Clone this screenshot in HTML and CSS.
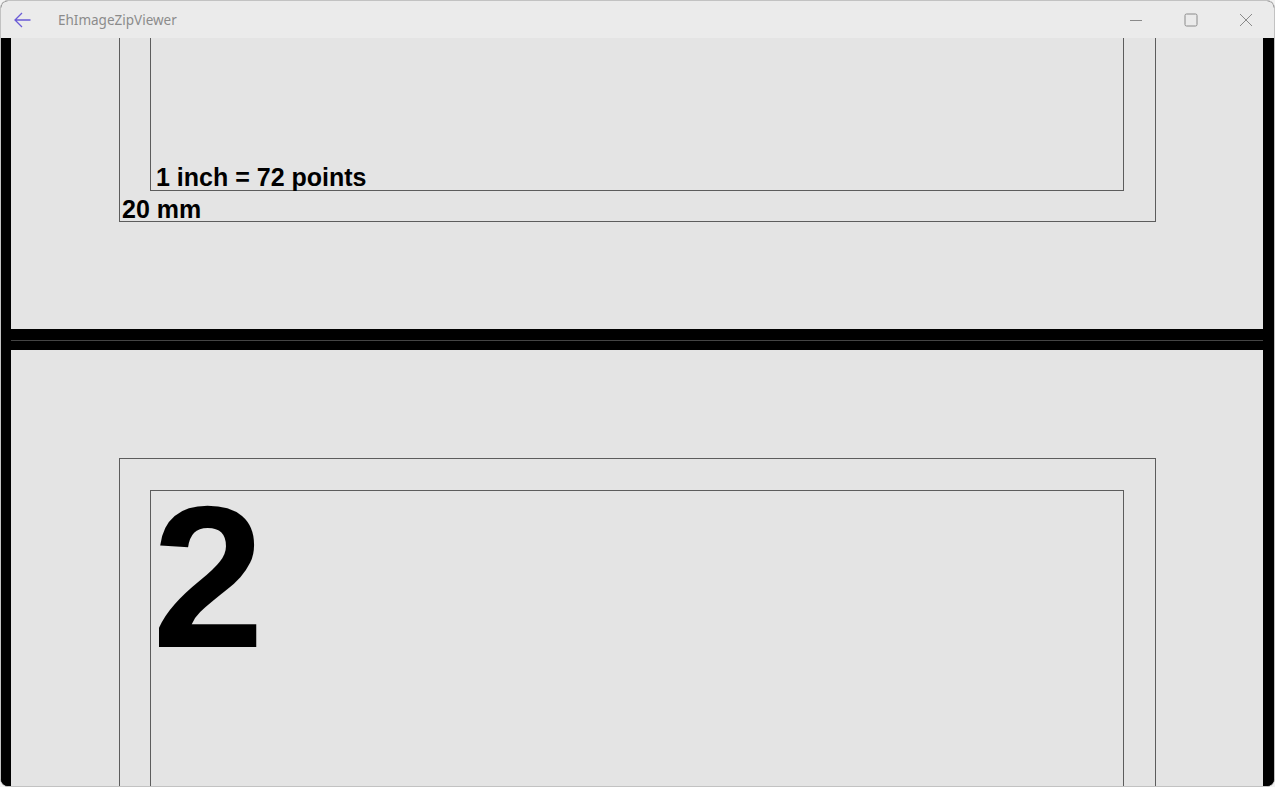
FILE: index.html
```html
<!DOCTYPE html>
<html>
<head>
<meta charset="utf-8">
<title>EhImageZipViewer</title>
<link rel="stylesheet" href="styles.css">
</head>
<body>
<div class="window">
  <div class="titlebar">
    <div class="back">
      <svg width="18" height="16" viewBox="0 0 18 16"><path d="M1 8 H16.5 M8 1 L1 8 L8 15" fill="none" stroke="#6a5bd6" stroke-width="1.3"/></svg>
    </div>
    <div class="title">EhImageZipViewer</div>
    <div class="caption">
      <div class="cbtn"><svg width="14" height="14" viewBox="0 0 14 14"><path d="M1 7.5 H13" stroke="#8a8a8a" stroke-width="1"/></svg></div>
      <div class="cbtn"><svg width="14" height="14" viewBox="0 0 14 14"><rect x="1" y="1" width="12" height="12" rx="1.5" fill="none" stroke="#8a8a8a" stroke-width="1"/></svg></div>
      <div class="cbtn"><svg width="14" height="14" viewBox="0 0 14 14"><path d="M1 1 L13 13 M13 1 L1 13" stroke="#8a8a8a" stroke-width="1"/></svg></div>
    </div>
  </div>
  <div class="viewer">
    <div class="pages">
      <div class="page page-first">
        <div class="outer">
          <div class="inner inner-end">
            <div class="label">1 inch = 72 points</div>
          </div>
          <div class="label label-outer">20 mm</div>
        </div>
      </div>
      <div class="sep"></div>
      <div class="page">
        <div class="outer">
          <div class="inner">
            <div class="bignum">2</div>
          </div>
        </div>
      </div>
    </div>
  </div>
</div>
</body>
</html>
```

FILE: styles.css
```css
html, body {
  margin: 0;
  padding: 0;
  background: #f2f2f2;
}
.window {
  width: 1275px;
  height: 787px;
  box-sizing: border-box;
  border: 1px solid #c2c2c2;
  border-radius: 8px;
  overflow: hidden;
  display: flex;
  flex-direction: column;
  background: #000;
}
.titlebar {
  height: 37px;
  flex: none;
  background: #ebebeb;
  display: flex;
  align-items: center;
  font-family: "Noto Sans", "Open Sans", sans-serif;
}
.back {
  width: 18px;
  height: 16px;
  margin-left: 13px;
  margin-top: 1px;
  display: flex;
}
.title {
  margin-left: 26px;
  font-size: 13.5px;
  color: #8b8b8b;
  margin-top: 1px;
}
.caption {
  margin-left: auto;
  display: flex;
  margin-right: 21px;
  margin-top: 0;
}
.cbtn {
  width: 14px;
  height: 14px;
  display: flex;
  margin-left: 41px;
}
.viewer {
  flex: 1;
  overflow: hidden;
  background: #000;
  padding: 0 11px 0 10px;
}
.pages {
  margin-top: -1480px;
}
.page {
  height: 1771px;
  box-sizing: border-box;
  background: #e4e4e4;
  padding: 108px 107px 107px 108px;
  display: flex;
  flex-direction: column;
}
.sep {
  height: 21px;
  background: linear-gradient(#000 0 11px, #444 11px 12px, #000 12px);
}
.outer {
  flex: 1;
  border: 1px solid #5c5c5c;
  padding: 31px 31px 0 30px;
  display: flex;
  flex-direction: column;
}
.inner {
  flex: 1;
  border: 1px solid #5c5c5c;
  display: flex;
  flex-direction: column;
}
.inner-end {
  justify-content: flex-end;
  margin-bottom: 6px;
}
.label {
  font-family: "Liberation Sans", Arial, sans-serif;
  font-weight: bold;
  font-size: 25px;
  line-height: 25px;
  color: #000;
  padding-left: 5px;
}
.label-outer {
  line-height: 24px;
  padding-left: 2px;
  margin-left: -30px;
}
.bignum {
  font-family: "Liberation Sans", Arial, sans-serif;
  font-weight: bold;
  font-size: 202px;
  line-height: 173px;
  color: #000;
  padding-left: 1px;
}
```
